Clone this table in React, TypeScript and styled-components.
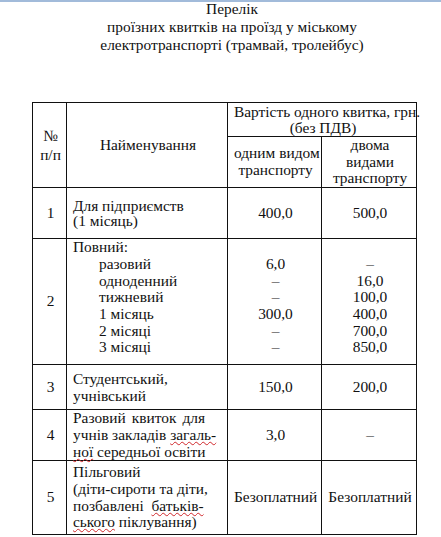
import styled, { createGlobalStyle } from "styled-components";

const GlobalStyle = createGlobalStyle`
  html, body {
    margin: 0;
    padding: 0;
    background: #ffffff;
  }
`;

const serif = `"Liberation Serif", "Times New Roman", "DejaVu Serif", serif`;

const Page = styled.div`
  width: 441px;
  height: 537px;
  overflow: hidden;
  background: #ffffff;
  font-family: ${serif};
  color: #111111;
`;

const TopBar = styled.div`
  height: 2px;
  background: #a2bbda;
`;

const Title = styled.div`
  margin-top: -2px;
  padding-left: 23px;
  text-align: center;
  font-size: 15.4px;
  line-height: 18px;
`;

const Table = styled.table`
  margin: 48px 0 0 32px;
  width: 384px;
  border-collapse: collapse;
  table-layout: fixed;
  font-family: ${serif};
  font-size: 15.4px;
  line-height: 16.7px;
  color: #111111;
`;

const Cell = styled.td<{
  $align?: "left" | "center";
  $valign?: "top" | "middle";
  $h?: number;
  $lh?: number;
}>`
  border: 1px solid #111111;
  padding: 0 4px 0 6px;
  text-align: ${(p) => p.$align ?? "center"};
  vertical-align: ${(p) => p.$valign ?? "middle"};
  height: ${(p) => (p.$h ? `${p.$h}px` : "auto")};
  line-height: ${(p) => (p.$lh ? `${p.$lh}px` : "inherit")};
  box-sizing: border-box;
  white-space: nowrap;
`;

const Name = styled.div<{ $right?: number }>`
  padding-right: ${(p) => p.$right ?? 0}px;
`;

const Line = styled.div<{ $indent?: boolean; $justify?: boolean }>`
  padding-left: ${(p) => (p.$indent ? "26px" : "0")};
  text-align: ${(p) => (p.$justify ? "justify" : "left")};
  text-align-last: ${(p) => (p.$justify ? "justify" : "auto")};
`;

const Values = styled.div`
  text-align: center;
`;

const Spell = styled.span`
  text-decoration: underline wavy #d0262a;
  text-decoration-thickness: 1px;
  text-underline-offset: 1px;
`;

const fullItems = ["разовий", "одноденний", "тижневий", "1 місяць", "2 місяці", "3 місяці"];
const oneKind = ["6,0", "–", "–", "300,0", "–", "–"];
const twoKinds = ["–", "16,0", "100,0", "400,0", "700,0", "850,0"];

export default function App() {
  return (
    <Page>
      <GlobalStyle />
      <TopBar />
      <Title>
        <div>Перелік</div>
        <div>проїзних квитків на проїзд у міському</div>
        <div>електротранспорті (трамвай, тролейбус)</div>
      </Title>
      <Table>
        <colgroup>
          <col style={{ width: 34 }} />
          <col style={{ width: 161 }} />
          <col style={{ width: 94 }} />
          <col style={{ width: 95 }} />
        </colgroup>
        <tbody>
          <tr>
            <Cell rowSpan={2} $lh={19}>
              №
              <br />
              п/п
            </Cell>
            <Cell rowSpan={2}>Найменування</Cell>
            <Cell colSpan={2} $h={34} $lh={15.6}>
              Вартість одного квитка, грн.
              <br />
              (без ПДВ)
            </Cell>
          </tr>
          <tr>
            <Cell $h={51}>
              одним видом
              <br />
              транспорту
            </Cell>
            <Cell>
              двома
              <br />
              видами
              <br />
              транспорту
            </Cell>
          </tr>
          <tr>
            <Cell $h={51}>1</Cell>
            <Cell $align="left" $lh={15.6}>
              <Line>Для підприємств</Line>
              <Line>(1 місяць)</Line>
            </Cell>
            <Cell>400,0</Cell>
            <Cell>500,0</Cell>
          </tr>
          <tr>
            <Cell $h={126}>2</Cell>
            <Cell $align="left" $valign="top">
              <Line>Повний:</Line>
              {fullItems.map((item) => (
                <Line key={item} $indent>
                  {item}
                </Line>
              ))}
            </Cell>
            <Cell $valign="top">
              <Values>
                <div>&nbsp;</div>
                {oneKind.map((v, i) => (
                  <div key={i}>{v}</div>
                ))}
              </Values>
            </Cell>
            <Cell $valign="top">
              <Values>
                <div>&nbsp;</div>
                {twoKinds.map((v, i) => (
                  <div key={i}>{v}</div>
                ))}
              </Values>
            </Cell>
          </tr>
          <tr>
            <Cell $h={45}>3</Cell>
            <Cell $align="left" $lh={17}>
              <Line>Студентський,</Line>
              <Line>учнівський</Line>
            </Cell>
            <Cell>150,0</Cell>
            <Cell>200,0</Cell>
          </tr>
          <tr>
            <Cell $h={50}>4</Cell>
            <Cell $align="left">
              <Name $right={18}>
                <Line $justify>Разовий квиток для</Line>
                <Line>
                  учнів закладів <Spell>загаль-</Spell>
                </Line>
                <Line>
                  <Spell>ної</Spell> середньої освіти
                </Line>
              </Name>
            </Cell>
            <Cell>3,0</Cell>
            <Cell>–</Cell>
          </tr>
          <tr>
            <Cell $h={74}>5</Cell>
            <Cell $align="left" $lh={16.7}>
              <Line>Пільговий</Line>
              <Line>(діти-сироти та діти,</Line>
              <Line>
                позбавлені&nbsp; <Spell>батьків-</Spell>
              </Line>
              <Line>
                <Spell>ського</Spell> піклування)
              </Line>
            </Cell>
            <Cell>Безоплатний</Cell>
            <Cell>Безоплатний</Cell>
          </tr>
        </tbody>
      </Table>
    </Page>
  );
}
